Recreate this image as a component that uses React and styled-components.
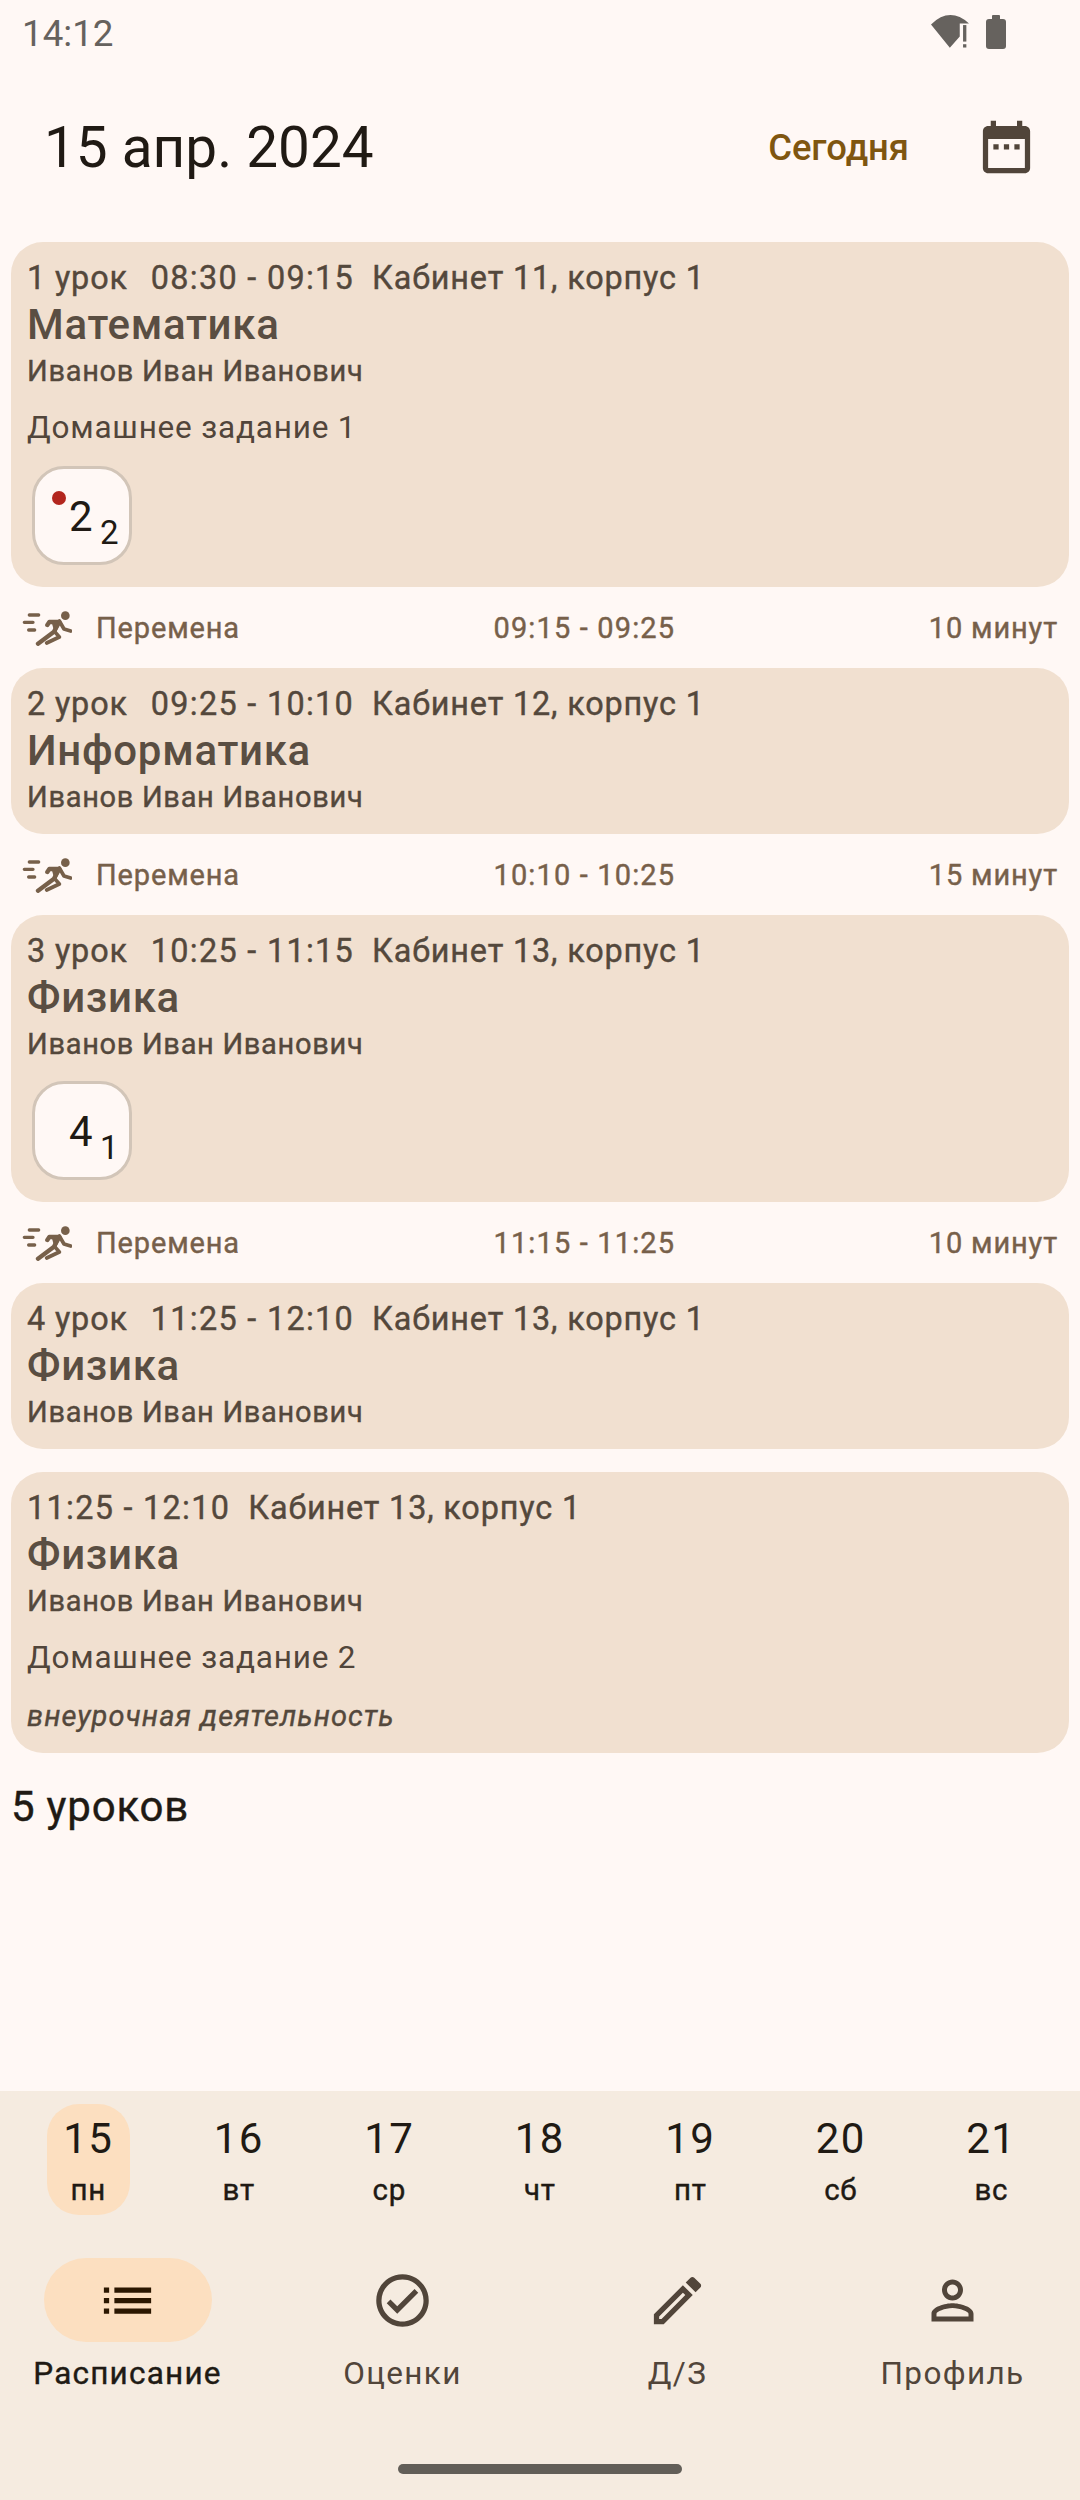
import React from "react";
import styled, { createGlobalStyle, css } from "styled-components";

const Global = createGlobalStyle`
  html, body { margin: 0; padding: 0; background: #fff8f5; }
  * { box-sizing: border-box; }
  body { font-family: Roboto, "Noto Sans", sans-serif; }
`;

const semi = css`
  -webkit-text-stroke: 0.4px currentColor;
`;

const Page = styled.div`
  width: 1080px;
  height: 2500px;
  display: flex;
  flex-direction: column;
  background: #fff8f5;
  overflow: hidden;
`;

const StatusBar = styled.div`
  height: 66px;
  display: flex;
  align-items: center;
  justify-content: space-between;
  padding: 0 74px 0 22px;
`;
const Clock = styled.span`
  font-size: 36.75px;
  color: #66625e;
`;
const StatusIcons = styled.div`
  display: flex;
  align-items: center;
  gap: 17px;
  padding-bottom: 3px;
`;

const Header = styled.header`
  height: 162px;
  display: flex;
  align-items: center;
  padding: 0 42px 0 44px;
`;
const DateTitle = styled.h1`
  flex: 1;
  margin: 0;
  font-size: 56.7px;
  font-weight: 400;
  color: #201a14;
`;
const TodayButton = styled.span`
  font-size: 36.4px;
  font-weight: 500;
  color: #7f5610;
  margin-right: 66px;
`;
const CalendarButton = styled.span`
  display: flex;
  color: #51453a;
  padding-top: 5px;
`;

const Schedule = styled.main`
  flex: 1;
  padding: 14px 11px 0;
`;
const Card = styled.article`
  background: #f1e0d0;
  border-radius: 32px;
  padding: 12px 16px;
  color: #51453a;
  & + & { margin-top: 23px; }
`;
const MetaLine = styled.div`
  height: 48px;
  line-height: 48px;
  font-size: 32.4px;
  letter-spacing: 0.85px;
  color: #54483c;
  display: flex;
  white-space: nowrap;
  ${semi}
`;
const LessonNo = styled.span`
  margin-right: 23px;
`;
const TimeRange = styled.span`
  margin-right: 18px;
  letter-spacing: 1.3px;
`;
const Subject = styled.div`
  height: 44px;
  line-height: 46px;
  font-size: 42px;
  font-weight: 500;
  letter-spacing: 0.7px;
  color: #5a4e42;
`;
const Teacher = styled.div`
  height: 50px;
  line-height: 50px;
  font-size: 29px;
  letter-spacing: 0.7px;
  color: #54483c;
  ${semi}
`;
const Homework = styled.div`
  margin-top: 12px;
  height: 40px;
  line-height: 40px;
  font-size: 31.5px;
  letter-spacing: 0.8px;
`;
const Note = styled.div`
  margin-top: 18px;
  padding-bottom: 5px;
  height: 45px;
  line-height: 40px;
  font-size: 29px;
  font-style: italic;
  letter-spacing: 1.05px;
  color: #54483c;
  ${semi}
`;
const GradeRow = styled.div`
  margin-top: ${(p) => p.$gap}px;
  padding: 0 0 10px 5px;
`;
const GradeBox = styled.div`
  position: relative;
  width: 100px;
  height: 99px;
  background: #fff8f5;
  border: 3px solid #d2c5b8;
  border-radius: 32px;
  color: #201a14;
`;
const GradeDot = styled.i`
  position: absolute;
  left: 17px;
  top: 22px;
  width: 14px;
  height: 14px;
  border-radius: 50%;
  background: #b3261e;
`;
const GradeValue = styled.span`
  position: absolute;
  left: 34px;
  top: 23px;
  font-size: 42px;
  line-height: 50px;
`;
const GradeWeight = styled.span`
  position: absolute;
  left: 65px;
  top: 44px;
  font-size: 33px;
  line-height: 40px;
`;
const BreakRow = styled.div`
  height: 81px;
  margin: 0 -11px;
  padding: 0 22px;
  display: flex;
  align-items: center;
  justify-content: space-between;
  font-size: 29px;
  letter-spacing: 0.85px;
  color: #77604a;
  ${semi}
`;
const BreakLabel = styled.div`
  display: flex;
  align-items: center;
  gap: 24px;
`;
const BreakTime = styled.span`
  letter-spacing: 1.15px;
`;
const Total = styled.div`
  margin-top: 29px;
  font-size: 42px;
  line-height: 50px;
  letter-spacing: 0.8px;
  color: #201a14;
  ${semi}
`;

const Bottom = styled.footer`
  height: 409px;
  background: #f5ebe0;
  padding-top: 13px;
  display: flex;
  flex-direction: column;
`;
const Days = styled.div`
  display: grid;
  grid-template-columns: repeat(7, 150.5px);
  padding-left: 13px;
`;
const Day = styled.div`
  height: 111px;
  width: 83px;
  justify-self: center;
  border-radius: 32px;
  background: ${(p) => (p.$active ? "#fcdfc0" : "transparent")};
  display: flex;
  flex-direction: column;
  align-items: center;
  color: #201a14;
`;
const DayNumber = styled.span`
  margin-top: 10px;
  font-size: 42px;
  line-height: 50px;
  letter-spacing: 1.4px;
`;
const DayName = styled.span`
  margin-top: 2px;
  font-size: 29.5px;
  line-height: 48px;
  letter-spacing: 0.7px;
  ${semi}
`;
const Nav = styled.nav`
  margin-top: 43px;
  display: grid;
  grid-template-columns: repeat(4, 275px);
  justify-content: center;
`;
const NavItem = styled.div`
  display: flex;
  flex-direction: column;
  align-items: center;
  color: ${(p) => (p.$active ? "#201a14" : "#51453a")};
`;
const NavIcon = styled.div`
  width: 168px;
  height: 84px;
  border-radius: 42px;
  background: ${(p) => (p.$active ? "#fcdfc0" : "transparent")};
  color: ${(p) => (p.$active ? "#2b1700" : "#51453a")};
  display: flex;
  align-items: center;
  justify-content: center;
`;
const NavLabel = styled.span`
  margin-top: 10px;
  font-size: 31.5px;
  line-height: 44px;
  letter-spacing: ${(p) => (p.$active ? 1.2 : 1.35)}px;
  white-space: nowrap;
  ${(p) => p.$active && semi}
`;
const HomeBar = styled.div`
  width: 284px;
  height: 10px;
  margin: 68px auto 0;
  border-radius: 5px;
  background: #625e58;
`;

const Icon = ({ d, size = 63 }) => (
  <svg width={size} height={size} viewBox="0 0 24 24" fill="currentColor">
    <path d={d} />
  </svg>
);

const ICONS = {
  list: "M3 13h2v-2H3v2zm0 4h2v-2H3v2zm0-8h2V7H3v2zm4 4h14v-2H7v2zm0 4h14v-2H7v2zM7 7v2h14V7H7z",
  check:
    "M12 2C6.48 2 2 6.48 2 12s4.48 10 10 10 10-4.48 10-10S17.52 2 12 2zm0 18c-4.41 0-8-3.59-8-8s3.59-8 8-8 8 3.59 8 8-3.59 8-8 8zm4.59-12.42L10 14.17l-2.59-2.58L6 13l4 4 8-8z",
  edit: "M3 17.25V21h3.75L17.81 9.94l-3.75-3.75L3 17.25zM5.92 19H5v-.92l9.06-9.06.92.92L5.92 19zM20.71 5.63l-2.34-2.34c-.2-.2-.45-.29-.71-.29s-.51.1-.7.29l-1.83 1.83 3.75 3.75 1.83-1.83c.39-.39.39-1.02 0-1.41z",
  person:
    "M12 5.9c1.16 0 2.1.94 2.1 2.1s-.94 2.1-2.1 2.1S9.9 9.16 9.9 8s.94-2.1 2.1-2.1m0 9c2.97 0 6.1 1.46 6.1 2.1v1.1H5.9V17c0-.64 3.13-2.1 6.1-2.1M12 4C9.79 4 8 5.79 8 8s1.79 4 4 4 4-1.79 4-4-1.79-4-4-4zm0 9c-2.67 0-8 1.34-8 4v3h16v-3c0-2.66-5.33-4-8-4z",
  calendar:
    "M19 3h-1V1h-2v2H8V1H6v2H5c-1.11 0-1.99.9-1.99 2L3 19c0 1.1.89 2 2 2h14c1.1 0 2-.9 2-2V5c0-1.1-.9-2-2-2zm0 16H5V8h14v11zM7 10h2v2H7zm4 0h2v2h-2zm4 0h2v2h-2z",
};

const Wifi = () => (
  <svg width="38" height="33" viewBox="33 27 115 99" fill="#66625e">
    <path d="M33 55 Q90 0 148 52 L120 52 L120 92 L90 126Z" />
    <rect x="130" y="57" width="10" height="50" />
    <rect x="130" y="115" width="10" height="10" />
  </svg>
);
const Battery = () => (
  <svg width="20" height="34" viewBox="0 0 20 34" fill="#66625e">
    <rect x="6" y="0" width="8" height="5" rx="1" />
    <rect x="0" y="4" width="20" height="30" rx="3" />
  </svg>
);
const Sprint = () => (
  <svg width="50" height="36" viewBox="20 25 150 108" fill="none" stroke="#77604a" strokeWidth="10">
    <circle cx="150" cy="42" r="13" fill="#77604a" stroke="none" />
    <path d="M42 40h28M27 62h26M40 85h18" strokeLinecap="round" />
    <path d="M96 70l6-9h30L116 90L68 126" strokeLinecap="round" strokeLinejoin="round" strokeWidth="13" />
    <path d="M112 62h20l-12 28z" fill="#77604a" stroke="#77604a" strokeWidth="6" strokeLinejoin="round" />
    <path d="M132 58l14 24 20 6M118 90l14 16-38 18" strokeLinecap="round" strokeLinejoin="round" strokeWidth="11" />
  </svg>
);

const Lesson = ({ no, time, room, subject, homework, note, grade, gradeGap }) => (
  <Card>
    <MetaLine>
      {no && <LessonNo>{no} урок</LessonNo>}
      <TimeRange>{time}</TimeRange>
      <span>{room}</span>
    </MetaLine>
    <Subject>{subject}</Subject>
    <Teacher>Иванов Иван Иванович</Teacher>
    {homework && <Homework>{homework}</Homework>}
    {grade && (
      <GradeRow $gap={gradeGap}>
        <GradeBox>
          {grade.dot && <GradeDot />}
          <GradeValue>{grade.value}</GradeValue>
          <GradeWeight>{grade.weight}</GradeWeight>
        </GradeBox>
      </GradeRow>
    )}
    {note && <Note>{note}</Note>}
  </Card>
);

const Break = ({ time, length }) => (
  <BreakRow>
    <BreakLabel>
      <Sprint />
      <span>Перемена</span>
    </BreakLabel>
    <BreakTime>{time}</BreakTime>
    <span>{length}</span>
  </BreakRow>
);

const days = [
  ["15", "пн", true],
  ["16", "вт"],
  ["17", "ср"],
  ["18", "чт"],
  ["19", "пт"],
  ["20", "сб"],
  ["21", "вс"],
];
const nav = [
  ["list", "Расписание", true],
  ["check", "Оценки"],
  ["edit", "Д/З"],
  ["person", "Профиль"],
];

export default function App() {
  return (
    <Page>
      <Global />
      <StatusBar>
        <Clock>14:12</Clock>
        <StatusIcons>
          <Wifi />
          <Battery />
        </StatusIcons>
      </StatusBar>
      <Header>
        <DateTitle>15 апр. 2024</DateTitle>
        <TodayButton>Сегодня</TodayButton>
        <CalendarButton>
          <Icon d={ICONS.calendar} />
        </CalendarButton>
      </Header>
      <Schedule>
        <Lesson
          no="1"
          time="08:30 - 09:15"
          room="Кабинет 11, корпус 1"
          subject="Математика"
          homework="Домашнее задание 1"
          grade={{ value: "2", weight: "2", dot: true }}
          gradeGap={18}
        />
        <Break time="09:15 - 09:25" length="10 минут" />
        <Lesson no="2" time="09:25 - 10:10" room="Кабинет 12, корпус 1" subject="Информатика" />
        <Break time="10:10 - 10:25" length="15 минут" />
        <Lesson
          no="3"
          time="10:25 - 11:15"
          room="Кабинет 13, корпус 1"
          subject="Физика"
          grade={{ value: "4", weight: "1" }}
          gradeGap={12}
        />
        <Break time="11:15 - 11:25" length="10 минут" />
        <Lesson no="4" time="11:25 - 12:10" room="Кабинет 13, корпус 1" subject="Физика" />
        <Lesson
          time="11:25 - 12:10"
          room="Кабинет 13, корпус 1"
          subject="Физика"
          homework="Домашнее задание 2"
          note="внеурочная деятельность"
        />
        <Total>5 уроков</Total>
      </Schedule>
      <Bottom>
        <Days>
          {days.map(([n, w, a]) => (
            <Day key={n} $active={a}>
              <DayNumber>{n}</DayNumber>
              <DayName>{w}</DayName>
            </Day>
          ))}
        </Days>
        <Nav>
          {nav.map(([i, l, a]) => (
            <NavItem key={l} $active={a}>
              <NavIcon $active={a}>
                <Icon d={ICONS[i]} />
              </NavIcon>
              <NavLabel $active={a}>{l}</NavLabel>
            </NavItem>
          ))}
        </Nav>
        <HomeBar />
      </Bottom>
    </Page>
  );
}
